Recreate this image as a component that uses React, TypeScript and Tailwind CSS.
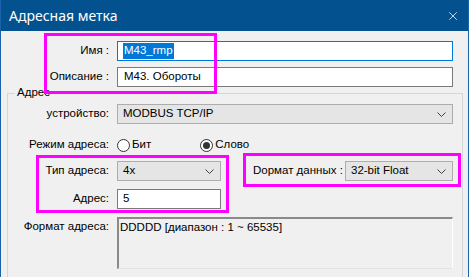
import { X } from "lucide-react";

const font = { fontFamily: '"Liberation Sans", Arial, sans-serif' };

function Chevron() {
  return (
    <svg width="9" height="5" viewBox="0 0 9 5" className="shrink-0">
      <path d="M0.5 0.5 L4.5 4.5 L8.5 0.5" fill="none" stroke="#404040" strokeWidth="1" />
    </svg>
  );
}

function Select({ value, className }: { value: string; className: string }) {
  return (
    <div className={`flex h-[20px] items-center justify-between border border-[#adadad] bg-[#e5e5e5] pl-[5px] pr-[6px] ${className}`}>
      <span>{value}</span>
      <Chevron />
    </div>
  );
}

function Radio({ checked, label }: { checked: boolean; label: string }) {
  return (
    <div className="flex items-center gap-[2px]">
      <div className="flex h-[13px] w-[13px] items-center justify-center rounded-full border border-[#333] bg-white">
        {checked && <div className="h-[7px] w-[7px] rounded-full bg-[#333]" />}
      </div>
      <span>{label}</span>
    </div>
  );
}

export default function App() {
  return (
    <div
      className="relative h-[277px] w-[469px] overflow-hidden border-x border-[#1a63a8] bg-[#f0f0f0] text-[11.5px] leading-none text-black"
      style={font}
    >
      {/* title bar */}
      <div className="flex h-[31px] items-center justify-between bg-[#03528f] pl-[8px] pr-[8px] text-white">
        <span className="text-[14px]" style={{ fontFamily: '"Noto Sans", sans-serif' }}>Адресная метка</span>
        <X className="h-[14px] w-[14px]" strokeWidth={1.3} />
      </div>

      {/* name / description */}
      <div className="mt-[10px] flex h-[20px] items-center">
        <span className="w-[110px] whitespace-nowrap pr-[2px] text-right">Имя :</span>
        <div className="ml-[6px] flex h-[20px] w-[336px] items-center border border-[#0078d7] bg-white pl-[5px]">
          <span className="bg-[#0078d7] px-[1px] py-[2px] text-white">M43_rmp</span>
        </div>
      </div>
      <div className="mt-[6px] flex h-[20px] items-center">
        <span className="w-[110px] whitespace-nowrap pr-[2px] text-right">Описание :</span>
        <div className="ml-[6px] flex h-[20px] w-[336px] items-center border border-[#7a7a7a] bg-white pl-[6px]">
          M43. Обороты
        </div>
      </div>

      {/* address group */}
      <div className="relative ml-[6px] mt-[6px] h-[200px] w-[456px] border border-[#d5d5d5] pt-[10px]">
        <span className="absolute left-[7px] top-[-7px] bg-[#f0f0f0] px-[2px]">Адрес</span>

        <div className="flex h-[20px] items-center">
          <span className="w-[103px] whitespace-nowrap pr-[2px] text-right">устройство:</span>
          <Select value="MODBUS TCP/IP" className="ml-[6px] w-[336px]" />
        </div>

        <div className="mt-[14px] flex h-[14px] items-center">
          <span className="w-[103px] whitespace-nowrap pr-[2px] text-right">Режим адреса:</span>
          <div className="ml-[6px] flex items-center gap-[49px]">
            <Radio checked={false} label="Бит" />
            <Radio checked label="Слово" />
          </div>
        </div>

        <div className="mt-[9px] flex h-[20px] items-center">
          <span className="w-[103px] whitespace-nowrap pr-[2px] text-right">Тип адреса:</span>
          <Select value="4x" className="ml-[6px] w-[104px]" />
          <span className="ml-[32px] w-[92px] whitespace-nowrap">Dормат данных :</span>
          <Select value="32-bit Float" className="w-[108px]" />
        </div>

        <div className="mt-[8px] flex h-[20px] items-center">
          <span className="w-[103px] whitespace-nowrap pr-[2px] text-right">Адрес:</span>
          <div className="ml-[6px] flex h-[20px] w-[104px] items-center border border-[#7a7a7a] bg-white pl-[5px]">5</div>
        </div>

        <div className="mt-[8px] flex items-start">
          <span className="mt-[4px] w-[103px] whitespace-nowrap pr-[2px] text-right">Формат адреса:</span>
          <div className="ml-[6px] h-[52px] w-[336px] border-b border-l-2 border-r border-t-2 border-b-[#e3e3e3] border-l-[#8a8a8a] border-r-white border-t-[#8a8a8a] pl-[1px] pt-[3px]">
            DDDDD [диапазон : 1 ~ 65535]
          </div>
        </div>
      </div>

      {/* annotation boxes */}
      <div className="absolute left-[43px] top-[33px] h-[61px] w-[173px] border-[3px] border-[#ff00ff]" />
      <div className="absolute left-[35px] top-[155px] h-[58px] w-[193px] border-[3px] border-[#ff00ff]" />
      <div className="absolute left-[242px] top-[153px] h-[34px] w-[218px] border-[3px] border-[#ff00ff]" />
    </div>
  );
}
